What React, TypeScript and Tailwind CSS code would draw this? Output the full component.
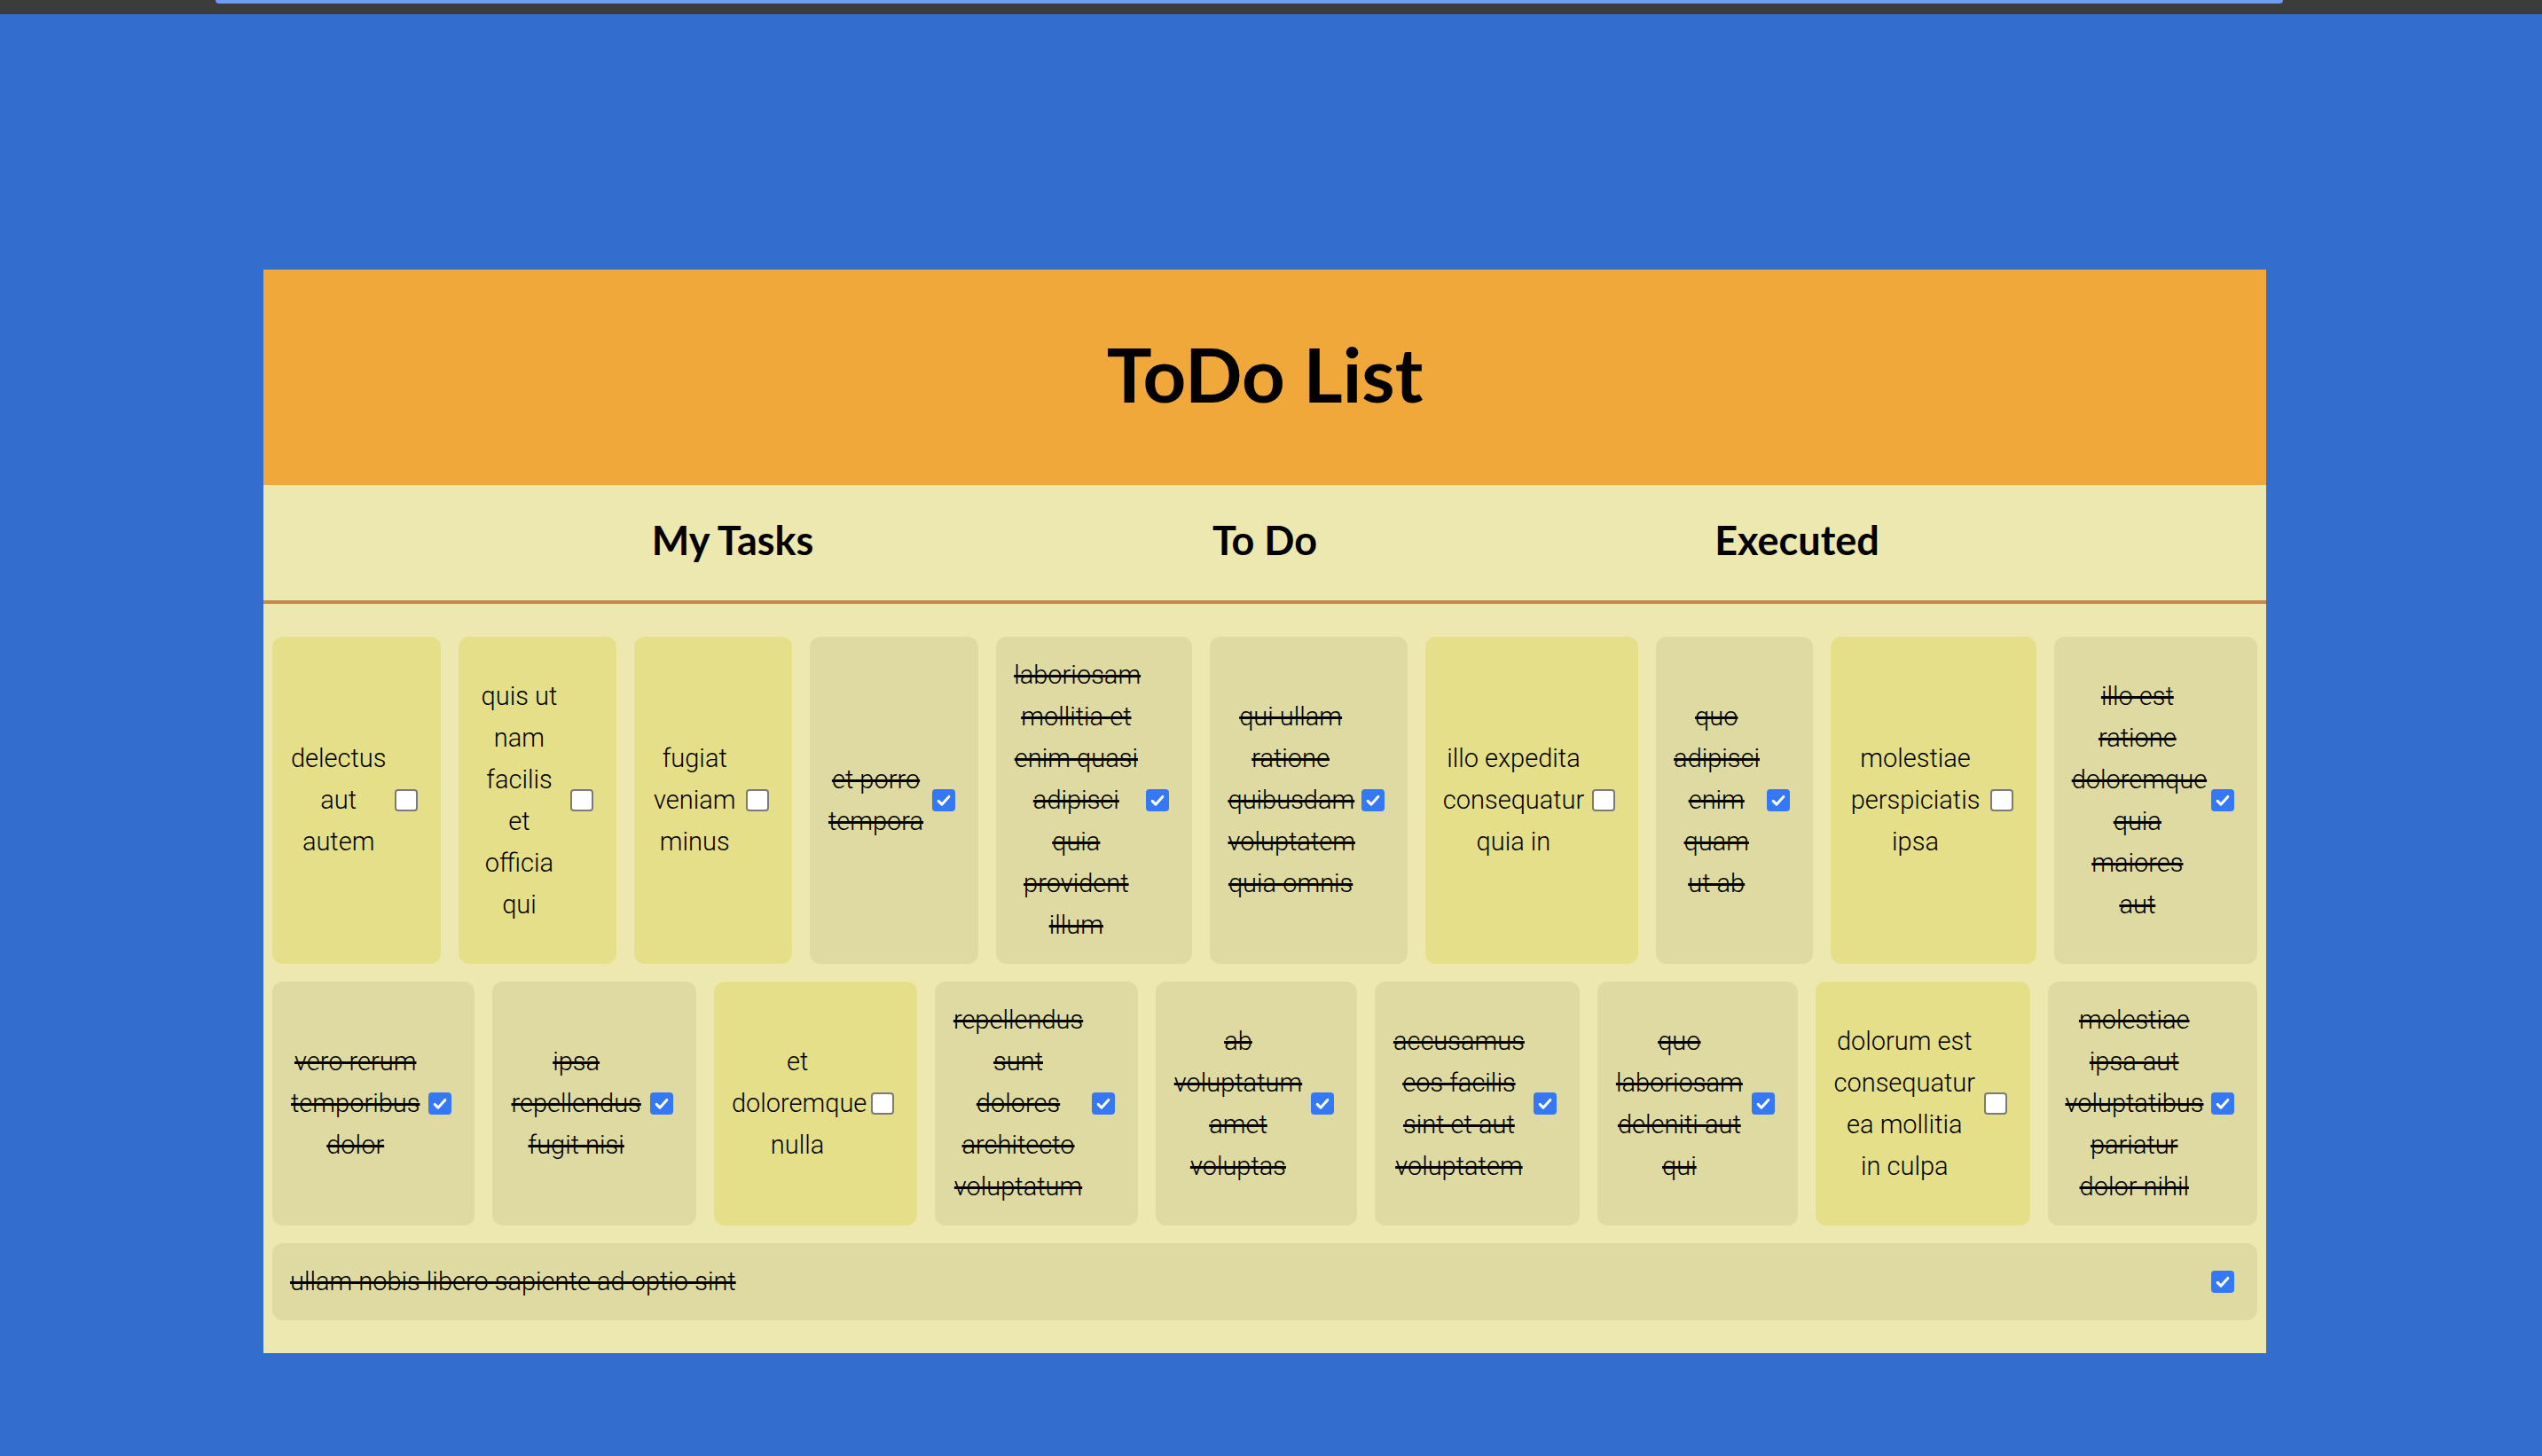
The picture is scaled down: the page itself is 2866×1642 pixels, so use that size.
import React from 'react'

type Todo = {
  lines: string[]
  done: boolean
  basis: string
}

const todos: Todo[] = [
  { lines: ['delectus', 'aut', 'autem'], done: false, basis: 'basis-[190px]' },
  { lines: ['quis ut', 'nam', 'facilis', 'et', 'officia', 'qui'], done: false, basis: 'basis-[177px]' },
  { lines: ['fugiat', 'veniam', 'minus'], done: false, basis: 'basis-[178px]' },
  { lines: ['et porro', 'tempora'], done: true, basis: 'basis-[190px]' },
  {
    lines: ['laboriosam', 'mollitia et', 'enim quasi', 'adipisci', 'quia', 'provident', 'illum'],
    done: true,
    basis: 'basis-[221px]',
  },
  { lines: ['qui ullam', 'ratione', 'quibusdam', 'voluptatem', 'quia omnis'], done: true, basis: 'basis-[222px]' },
  { lines: ['illo expedita', 'consequatur', 'quia in'], done: false, basis: 'basis-[240px]' },
  { lines: ['quo', 'adipisci', 'enim', 'quam', 'ut ab'], done: true, basis: 'basis-[177px]' },
  { lines: ['molestiae', 'perspiciatis', 'ipsa'], done: false, basis: 'basis-[231px]' },
  { lines: ['illo est', 'ratione', 'doloremque', 'quia', 'maiores', 'aut'], done: true, basis: 'basis-[229px]' },

  { lines: ['vero rerum', 'temporibus', 'dolor'], done: true, basis: 'basis-[228px]' },
  { lines: ['ipsa', 'repellendus', 'fugit nisi'], done: true, basis: 'basis-[229px]' },
  { lines: ['et', 'doloremque', 'nulla'], done: false, basis: 'basis-[229px]' },
  { lines: ['repellendus', 'sunt', 'dolores', 'architecto', 'voluptatum'], done: true, basis: 'basis-[228px]' },
  { lines: ['ab', 'voluptatum', 'amet', 'voluptas'], done: true, basis: 'basis-[227px]' },
  { lines: ['accusamus', 'eos facilis', 'sint et aut', 'voluptatem'], done: true, basis: 'basis-[230px]' },
  { lines: ['quo', 'laboriosam', 'deleniti aut', 'qui'], done: true, basis: 'basis-[226px]' },
  { lines: ['dolorum est', 'consequatur', 'ea mollitia', 'in culpa'], done: false, basis: 'basis-[241px]' },
  { lines: ['molestiae', 'ipsa aut', 'voluptatibus', 'pariatur', 'dolor nihil'], done: true, basis: 'basis-[236px]' },

  { lines: ['ullam nobis libero sapiente ad optio sint'], done: true, basis: 'basis-full' },
]

function Checkbox({ checked }: { checked: boolean }) {
  if (checked) {
    return (
      <span className="flex h-[25px] w-[26px] shrink-0 items-center justify-center rounded-[4px] bg-[#3478f6]">
        <svg viewBox="0 0 24 24" className="h-[20px] w-[20px]" fill="none">
          <path d="M5 12.5l4.5 4.5L19 6.5" stroke="white" strokeWidth="3.6" strokeLinecap="round" strokeLinejoin="round" />
        </svg>
      </span>
    )
  }
  return <span className="h-[25px] w-[26px] shrink-0 rounded-[4px] border-2 border-[#7a7a7a] bg-white" />
}

function TodoCard({ todo, wide }: { todo: Todo; wide?: boolean }) {
  return (
    <div
      className={`m-[10px] grow ${todo.basis} flex min-w-0 items-center gap-[9px] rounded-[12px] py-[20px] pl-[20px] pr-[26px] ${
        todo.done ? 'bg-[#dedaa2]' : 'bg-[#e5df8a]'
      }`}
    >
      <div
        className={`min-w-0 flex-1 text-[29px] font-light leading-[47px] text-black ${wide ? 'text-left' : 'text-center'} ${
          todo.done ? 'line-through decoration-[3px]' : ''
        }`}
        style={{ fontFamily: 'Roboto, "Liberation Sans", sans-serif' }}
      >
        {todo.lines.map((line, i) => (
          <div key={i} className="whitespace-nowrap">
            {line}
          </div>
        ))}
      </div>
      <Checkbox checked={todo.done} />
    </div>
  )
}

export default function App() {
  const heading = { fontFamily: 'Lato, "Open Sans", sans-serif' }

  return (
    <div className="h-screen overflow-hidden bg-[#336ecf]">
      {/* browser chrome strip */}
      <div className="h-[16px] bg-[#3c3c3c]">
        <div className="ml-[243px] h-[4px] w-[2331px] rounded-b-full bg-[#6e9cf1]" />
      </div>

      <div className="ml-[297px] mt-[288px] w-[2258px] bg-[#ede7b0]">
        <header className="flex h-[243px] items-center justify-center bg-[#f0a83b] pb-[8px]">
          <h1 className="text-[85px] font-bold text-black" style={heading}>
            ToDo List
          </h1>
        </header>

        <nav className="flex h-[134px] items-center justify-center border-b-4 border-[#c6884c] pb-[4px]" style={heading}>
          <div className="w-[600px] text-center text-[45px] font-bold">My Tasks</div>
          <div className="w-[600px] text-center text-[45px] font-bold">To Do</div>
          <div className="w-[600px] text-center text-[45px] font-bold">Executed</div>
        </nav>

        <div className="flex flex-wrap py-[27px]">
          {todos.map((t, i) => (
            <TodoCard key={i} todo={t} wide={t.basis === 'basis-full'} />
          ))}
        </div>
      </div>
    </div>
  )
}
